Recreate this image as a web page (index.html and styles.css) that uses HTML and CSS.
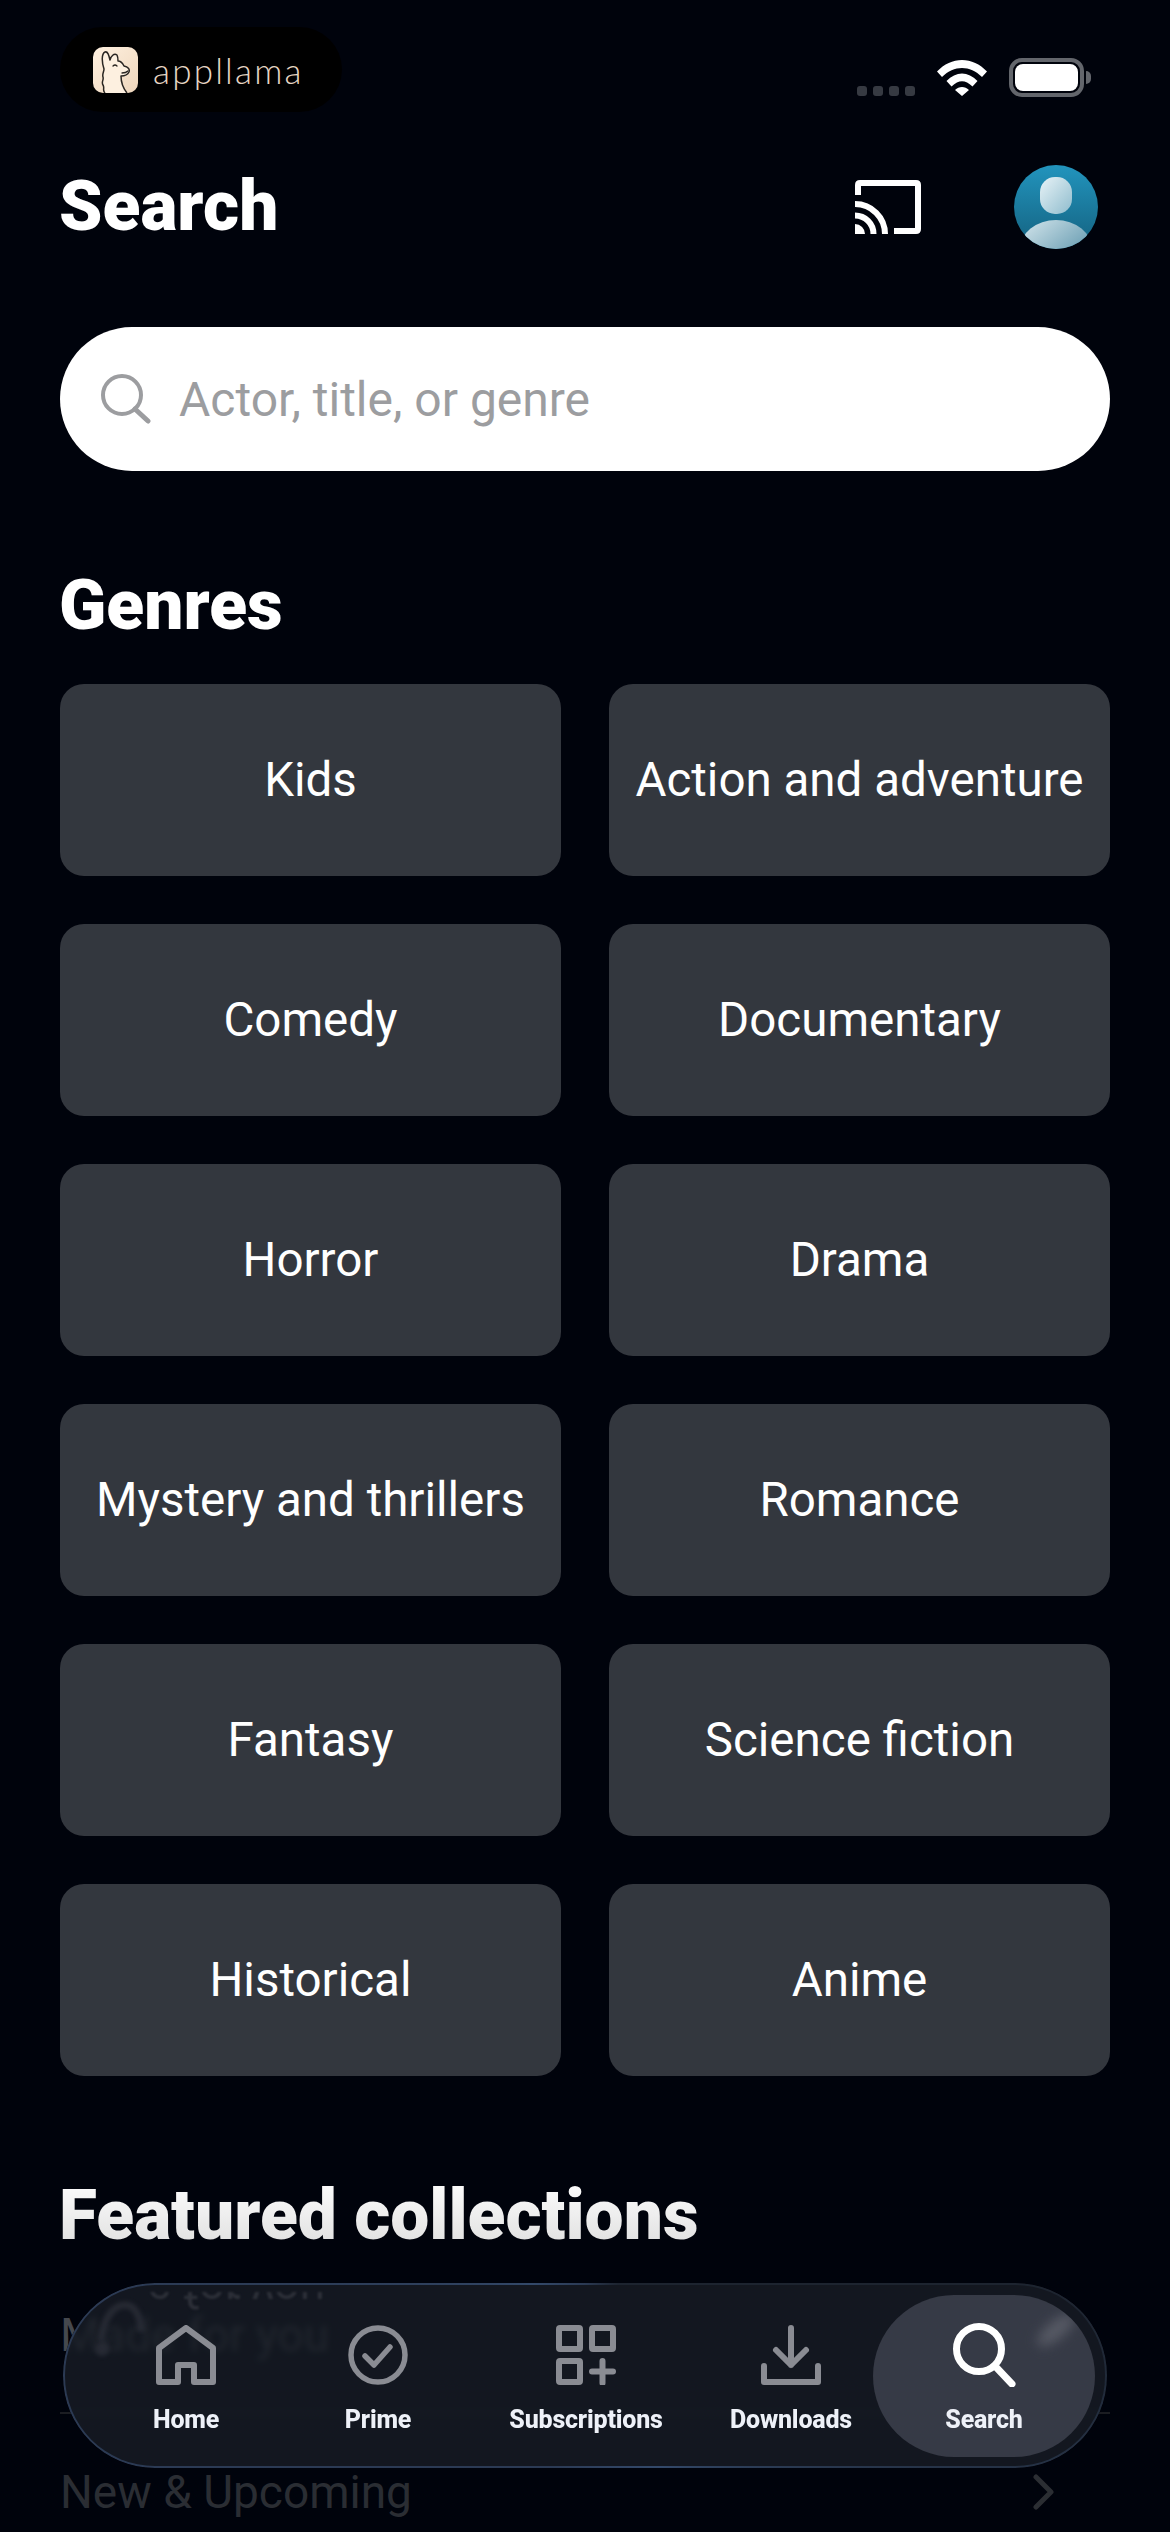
FILE: index.html
```html
<!DOCTYPE html>
<html lang="en">
<head>
<meta charset="utf-8">
<title>Search</title>
<link rel="stylesheet" href="styles.css">
</head>
<body>
<div class="phone">
  <header class="status">
    <div class="badge">
      <svg class="llama" viewBox="0 0 45 46">
        <defs><linearGradient id="lg" x1="0" y1="0" x2="1" y2="1"><stop offset="0" stop-color="#fff1e0"/><stop offset="1" stop-color="#eed6bc"/></linearGradient></defs>
        <rect width="45" height="46" rx="10" fill="url(#lg)"/>
        <path d="M12 46C9 43 12 41 10 38 8 35 11 33 10 30 9 27 11 25 11 22 9 16 8 7 12 5 15 4 16 9 17 13 18 9 21 6 24 8 25 10 25 12 25 14 28 14 30 17 31 19 35 20 37 22 36 25 34 29 30 29 28 29 28 35 30 41 34 46" fill="#fdf0e0" stroke="#2a2622" stroke-width="1.500" stroke-linejoin="round"/>
        <path d="M20 19Q22 17 24 19M29 26Q33 26 35 24" fill="none" stroke="#2a2622" stroke-width="1.300" stroke-linecap="round"/>
      </svg>
      <span class="brand">appllama</span>
    </div>
    <div class="sys">
      <div class="dots"><i></i><i></i><i></i><i></i></div>
      <svg class="wifi" viewBox="0 0 50 37"><path d="M0 12.500C14 -3 36 -3 50 12.500L45 18C33 6 17 6 5 18Z M9.500 22C19 12 31 12 40.500 22L35.500 27.500C28 20.500 22 20.500 14.500 27.500Z M18 31C22 27 28 27 32 31L25 37Z" fill="#fff"/></svg>
      <div class="battery"><div class="fill"></div></div>
      <div class="nub"></div>
    </div>
  </header>

  <div class="titlebar">
    <h1 class="heading">Search</h1>
    <div class="actions">
      <svg class="cast" viewBox="0 0 66 54"><path d="M3 15V5Q3 3 5 3H61Q63 3 63 5V49Q63 51 61 51H39" fill="none" stroke="#fff" stroke-width="6"/><path d="M0 24A30 30 0 0 1 30 54M0 35.500A18.500 18.500 0 0 1 18.500 54" fill="none" stroke="#fff" stroke-width="6"/><path d="M0 44A10 10 0 0 1 10 54H0Z" fill="#fff"/></svg>
      <svg class="avatar" viewBox="0 0 84 84">
        <defs>
          <linearGradient id="ag" x1="0" y1="0" x2="0" y2="1"><stop offset="0" stop-color="#2294bd"/><stop offset="1" stop-color="#14617f"/></linearGradient>
          <linearGradient id="ah" x1="0" y1="0" x2="1" y2="1"><stop offset="0" stop-color="#e8f3f7"/><stop offset="1" stop-color="#8fbccd"/></linearGradient>
          <linearGradient id="ab" x1="0" y1="0" x2="1" y2="1"><stop offset="0" stop-color="#d8e8ee"/><stop offset="1" stop-color="#3c7f9a"/></linearGradient>
          <clipPath id="ac"><circle cx="42" cy="42" r="42"/></clipPath>
        </defs>
        <circle cx="42" cy="42" r="42" fill="url(#ag)"/>
        <rect x="26" y="12" width="32" height="37" rx="15" fill="url(#ah)"/>
        <ellipse cx="42" cy="84" rx="36" ry="29" fill="url(#ab)" clip-path="url(#ac)"/>
      </svg>
    </div>
  </div>

  <div class="searchbox">
    <svg class="search-ico" viewBox="0 0 50 50"><circle cx="21" cy="21" r="19" fill="none" stroke="#9c9da0" stroke-width="4"/><path d="M34 35L47 47" stroke="#9c9da0" stroke-width="5" stroke-linecap="round"/></svg>
    <span class="placeholder">Actor, title, or genre</span>
  </div>

  <h2 class="heading genres-h">Genres</h2>
  <div class="grid">
    <div class="card">Kids</div>
    <div class="card">Action and adventure</div>
    <div class="card">Comedy</div>
    <div class="card">Documentary</div>
    <div class="card">Horror</div>
    <div class="card">Drama</div>
    <div class="card">Mystery and thrillers</div>
    <div class="card">Romance</div>
    <div class="card">Fantasy</div>
    <div class="card">Science fiction</div>
    <div class="card">Historical</div>
    <div class="card">Anime</div>
  </div>

  <h2 class="heading featured-h">Featured collections</h2>
  <ul class="links">
    <li class="link link-first">Made for you</li>
    <li class="link">New &amp; Upcoming<svg class="chev" viewBox="0 0 21 36"><path d="M3 3L18 18 3 33" fill="none" stroke="#2b2e33" stroke-width="5" stroke-linecap="round" stroke-linejoin="round"/></svg></li>
  </ul>

  <nav class="tabbar">
    <span class="refract" aria-hidden="true"><span class="refract-text">e for you</span></span>
    <svg class="refract-arc" viewBox="0 0 60 60" aria-hidden="true"><path d="M8 42C10 20 20 6 32 6 42 6 48 18 48 32" fill="none" stroke="#2b2e38" stroke-width="7"/><circle cx="9" cy="50" r="7" fill="#2b2e38"/></svg>
    <div class="tab t-home">
      <svg class="tab-ico" viewBox="0 0 60 60"><path d="M3 57V23L30 3 57 23V57H38V40H22V57Z" fill="none" stroke="#8a8c93" stroke-width="6" stroke-linejoin="round"/></svg>
      <span class="tab-label">Home</span>
    </div>
    <div class="tab t-prime">
      <svg class="tab-ico" viewBox="0 0 60 60"><circle cx="30" cy="30" r="27" fill="none" stroke="#8a8c93" stroke-width="5.500"/><path d="M17 31L26 40 42 22" fill="none" stroke="#8a8c93" stroke-width="5.500" stroke-linecap="round" stroke-linejoin="round"/></svg>
      <span class="tab-label">Prime</span>
    </div>
    <div class="tab t-subs">
      <svg class="tab-ico" viewBox="0 0 60 60"><g fill="none" stroke="#8a8c93" stroke-width="6"><rect x="3" y="3" width="21" height="21" rx="1"/><rect x="36" y="3" width="21" height="21" rx="1"/><rect x="3" y="36" width="21" height="21" rx="1"/></g><path d="M36 46.500H57M46.500 36V58" stroke="#8a8c93" stroke-width="6" stroke-linecap="round"/></svg>
      <span class="tab-label">Subscriptions</span>
    </div>
    <div class="tab t-down">
      <svg class="tab-ico" viewBox="0 0 60 60"><path d="M30 3V40M15 25L30 40 45 25" fill="none" stroke="#8a8c93" stroke-width="6" stroke-linecap="round" stroke-linejoin="round"/><path d="M3 41V57H57V41" fill="none" stroke="#8a8c93" stroke-width="6" stroke-linecap="round" stroke-linejoin="round"/></svg>
      <span class="tab-label">Downloads</span>
    </div>
    <div class="tab t-search">
      <span class="sheen"></span>
      <svg class="tab-ico search-tab-ico" viewBox="0 0 64 64"><circle cx="27" cy="26" r="22.500" fill="none" stroke="#fff" stroke-width="7"/><path d="M43 43L60 61" stroke="#fff" stroke-width="7" stroke-linecap="round"/></svg>
      <span class="tab-label search-label">Search</span>
    </div>
  </nav>
</div>
</body>
</html>
```

FILE: styles.css
```css
* { box-sizing: border-box; }
html, body { margin: 0; padding: 0; background: #00030c; }
body { font-family: "Roboto", sans-serif; color: #fff; }
.phone { position: relative; width: 1170px; height: 2532px; overflow: hidden; background: #00030c; padding: 27px 60px 0; }

.status { display: flex; justify-content: space-between; align-items: flex-start; height: 85px; }
.badge { display: flex; align-items: center; width: 282px; height: 85px; padding-left: 33px; background: #000; border-radius: 43px; }
.llama { width: 45px; height: 46px; margin-right: 15px; flex: none; }
.brand { font-family: "Lato", sans-serif; font-weight: 300; font-size: 35px; letter-spacing: 2.200px; color: #e6d6c4; }
.sys { display: flex; align-items: flex-end; height: 70px; margin-right: 19px; }
.dots { display: flex; gap: 6px; margin-bottom: 1px; }
.dots i { display: block; width: 10px; height: 10px; border-radius: 3px; background: #363a42; }
.wifi { width: 50px; height: 37px; margin: 0 0 1px 22px; }
.battery { width: 75px; height: 39px; border: 4px solid #63666c; border-radius: 13px; padding: 2px; margin-left: 22px; }
.fill { width: 100%; height: 100%; background: #fff; border-radius: 8px; }
.nub { width: 5px; height: 13px; background: #63666c; border-radius: 0 5px 5px 0; margin: 0 0 13px 2px; }

.titlebar { display: flex; justify-content: space-between; align-items: center; height: 84px; margin-top: 53px; }
.heading { margin: 0 0 0 -1px; font-family: "Roboto", sans-serif; font-weight: 900; font-size: 69.500px; line-height: 80px; color: #fff; }
.actions { display: flex; align-items: center; gap: 93px; margin-right: 12px; }
.cast { width: 66px; height: 54px; }
.avatar { width: 84px; height: 84px; }

.searchbox { display: flex; align-items: center; height: 144px; margin-top: 78px; background: #fff; border-radius: 72px; padding-left: 41px; }
.search-ico { width: 50px; height: 50px; flex: none; }
.placeholder { margin-left: 28px; font-size: 48px; color: #9c9da0; }

.genres-h { margin-top: 95px; }

.grid { display: grid; grid-template-columns: 501px 501px; gap: 48px; margin-top: 38px; }
.card { display: flex; align-items: center; justify-content: center; height: 192px; background: #33373e; border-radius: 24px; font-size: 47.500px; color: #fff; white-space: nowrap; }

.featured-h { margin-top: 100px; background: linear-gradient(#fff, #dcdcdc); -webkit-background-clip: text; background-clip: text; color: transparent; }

.links { list-style: none; margin: 2px 0 0; padding: 0; }
.link { display: flex; justify-content: space-between; align-items: center; height: 156px; font-size: 46px; color: #2a2d33; }
.link-first { color: #45484e; border-bottom: 2px solid #1b1d22; }
.chev { width: 21px; height: 36px; margin-right: 56px; }

.tabbar { position: absolute; left: 63px; top: 2283px; width: 1044px; height: 185px; display: flex; align-items: flex-start; padding: 42px 0 0 63px; border-radius: 92px; background: rgba(24, 29, 38, .8); backdrop-filter: blur(3px); }
.tabbar::before { content: ""; position: absolute; inset: 0; padding: 2px; border-radius: 92px; background: conic-gradient(from 20deg, #1d2430 0deg, #1d2430 60deg, #33496a 120deg, #2b3a54 180deg, #2b3a54 260deg, #33496a 310deg, #2b3a54 340deg, #1d2430 360deg); -webkit-mask: linear-gradient(#000 0 0) content-box, linear-gradient(#000 0 0); -webkit-mask-composite: xor; mask-composite: exclude; }
.refract { position: absolute; left: 67px; top: 9px; width: 195px; height: 22px; overflow: hidden; filter: blur(1px); }
.refract-text { display: block; font-size: 46px; line-height: 46px; color: #2c2f38; text-align: right; transform: scaleY(-1); margin-top: -25px; white-space: nowrap; }
.refract-arc { position: absolute; left: 30px; top: 16px; width: 60px; height: 60px; filter: blur(2px); opacity: .8; }

.tab { position: relative; display: flex; flex-direction: column; align-items: center; flex: none; }
.tab-ico { display: block; width: 60px; height: 60px; }
.tab-label { margin-top: 19px; font-weight: 800; font-size: 25px; line-height: 32px; letter-spacing: -.2px; color: #eef1f8; white-space: nowrap; }
.t-home { width: 120px; }
.t-prime { width: 120px; margin-left: 72px; }
.t-subs { width: 180px; margin-left: 58px; }
.t-down { width: 140px; margin-left: 45px; }
.t-search { width: 222px; height: 162px; margin: -30px 0 0 12px; padding-top: 28px; background: #363a46; border-radius: 81px; overflow: hidden; }
.search-tab-ico { width: 64px; height: 64px; }
.search-label { margin-top: 17px; }
.sheen { position: absolute; left: 160px; top: 26px; width: 46px; height: 18px; border-radius: 50%; background: #565964; filter: blur(6px); transform: rotate(-40deg); }
```
